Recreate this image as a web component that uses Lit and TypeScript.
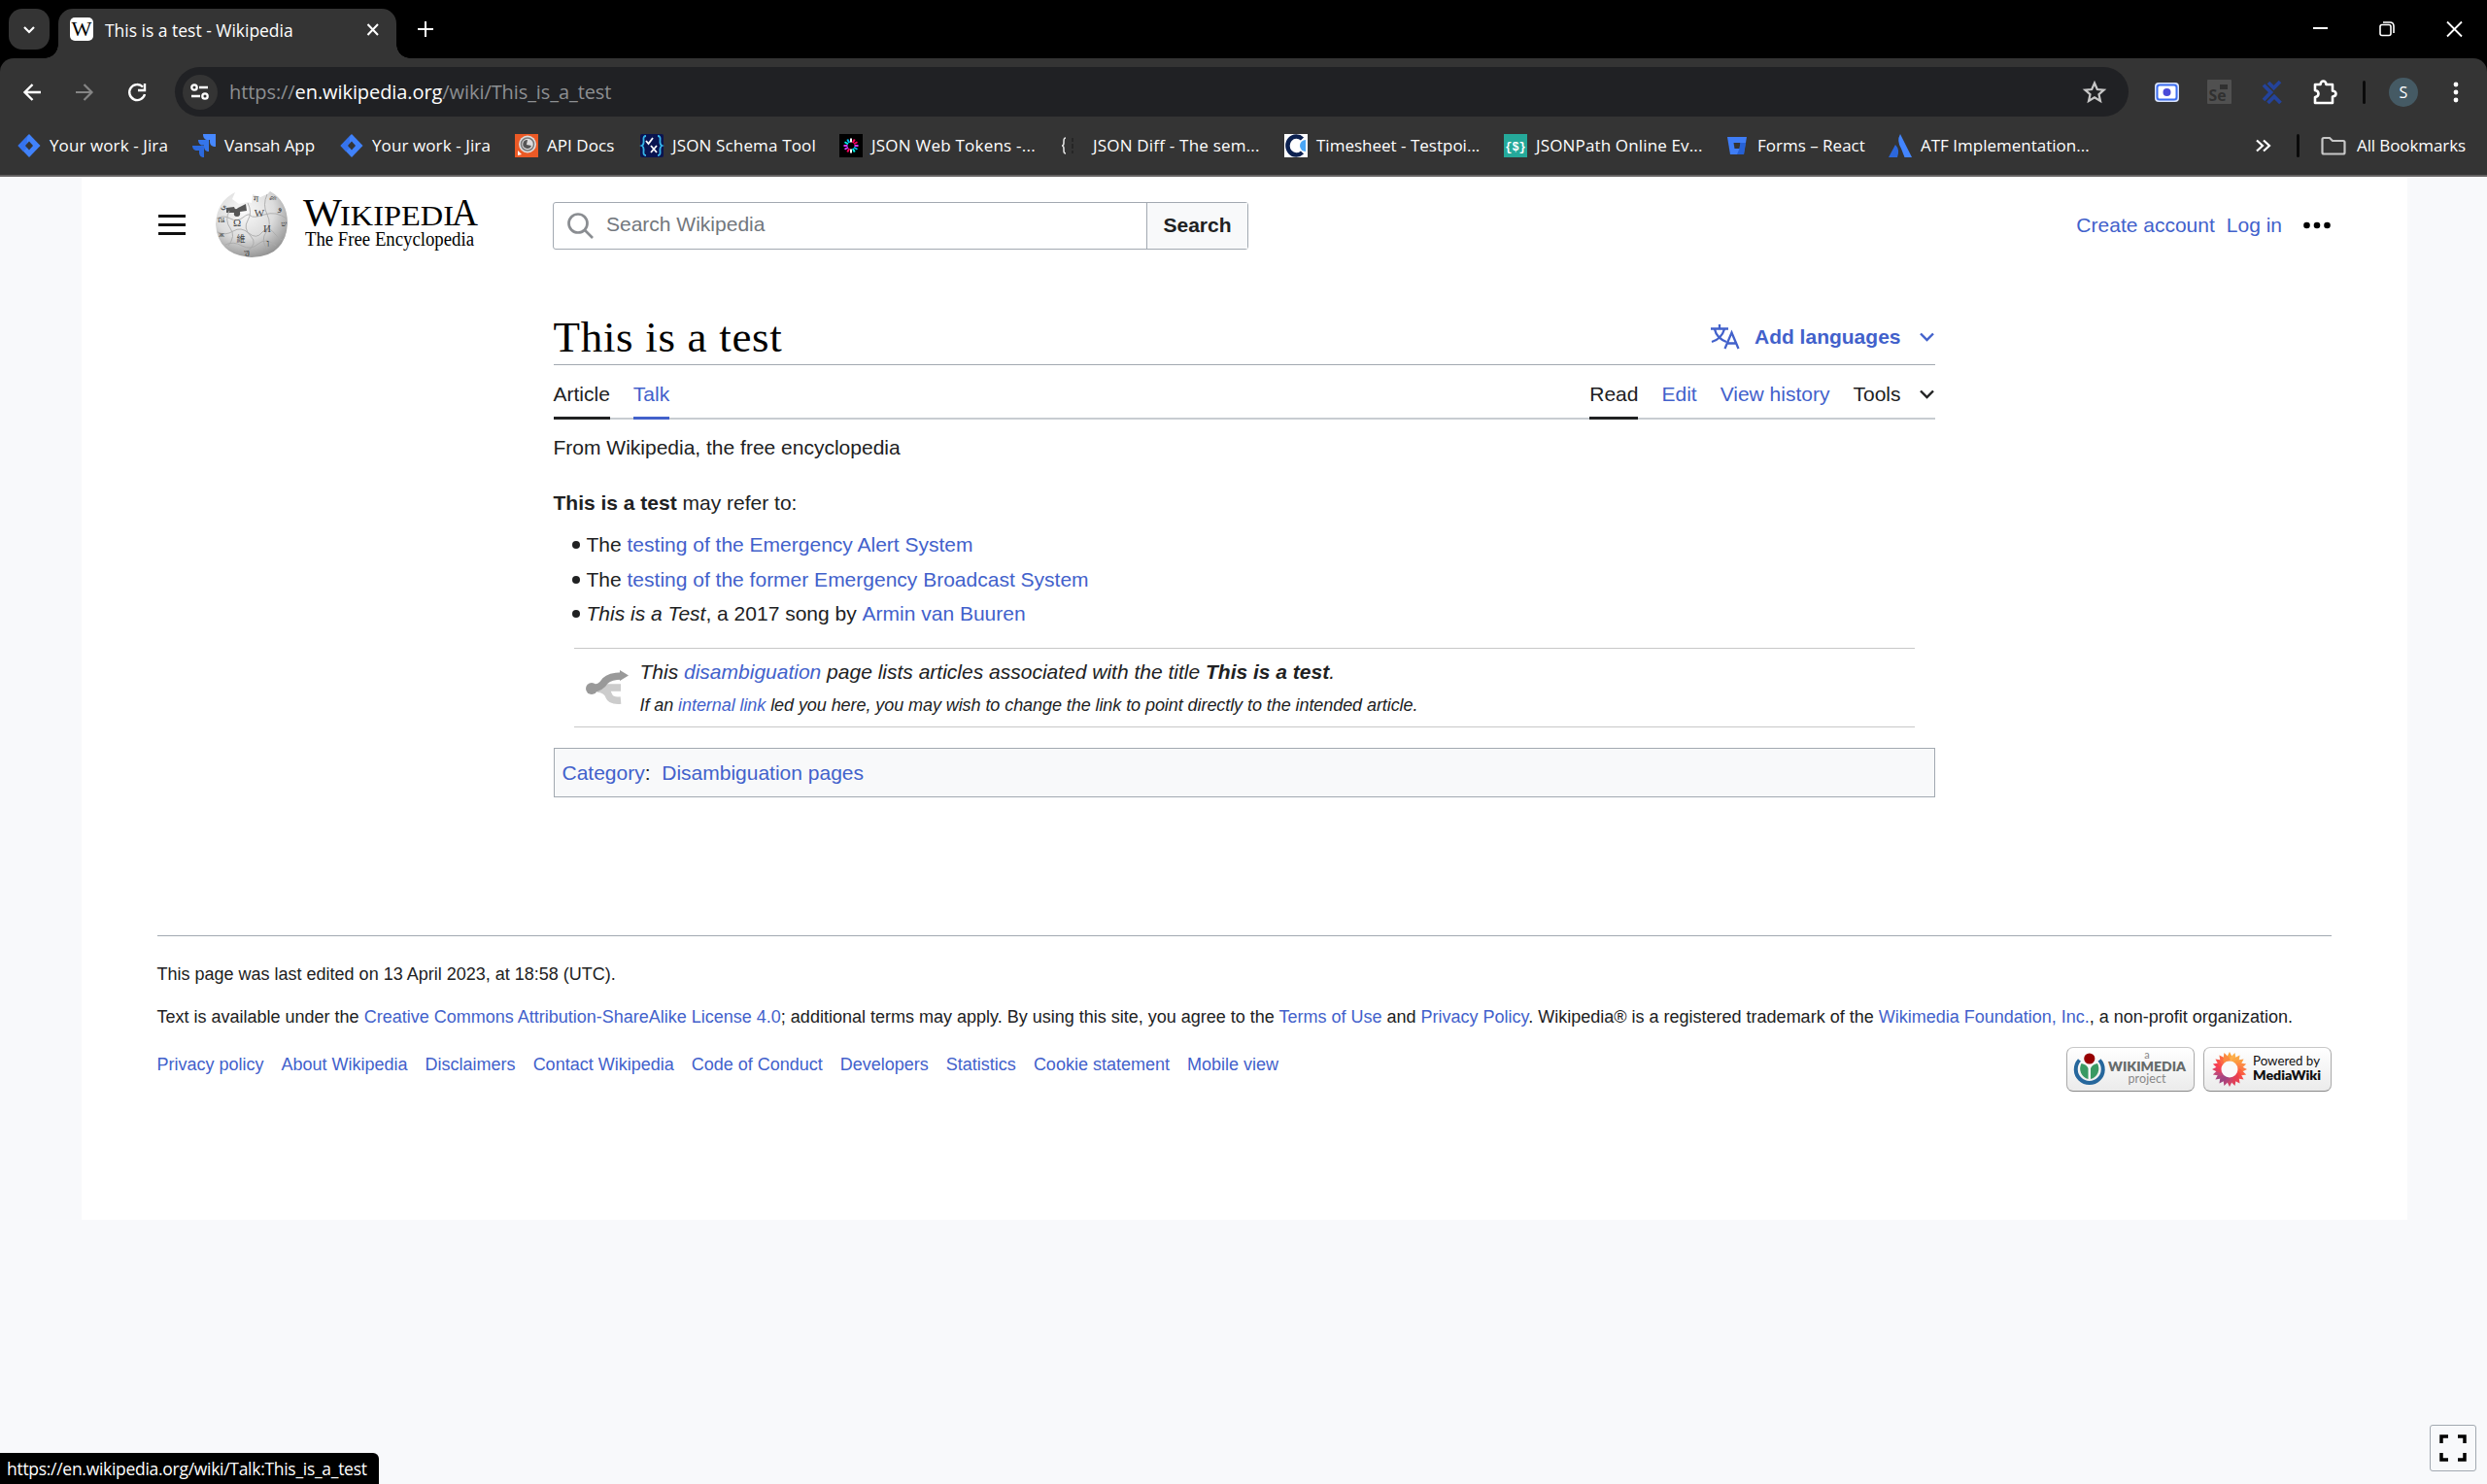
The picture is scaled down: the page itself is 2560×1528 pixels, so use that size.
import { LitElement, html, css, svg } from "lit";
import { customElement } from "lit/decorators.js";

const jira = svg`<path d="M12 0 L23.5 12 L12 24 L.5 12Z" fill="#4182fa"/><path d="M12 0C9 4 9 8 12 12L6 18 .5 12Z" fill="#3573ee"/><path d="M12 7.5L16 12 12 16.5 8 12Z" fill="#343434"/>`;
// `ls` is the tracking of each bookmark label, in pixels.
const bookmarks = [
  { t: "Your work - Jira", ls: 0.1, i: jira },
  { t: "Vansah App", ls: -0.1, i: svg`<path d="M11 0H24V13C20 13 18 11 18 8V6H16C13 6 11 4 11 0Z" fill="#4688ff"/><path d="M6 6H17V18C14 18 12 16 12 13V11.500H10C8 11.500 6 9 6 6Z" fill="#3575ea"/><path d="M0 12H12V24C9 24 7 22 7 19V17H5C2 17 0 15 0 12Z" fill="#2c69dd"/>` },
  { t: "Your work - Jira", ls: 0.1, i: jira },
  { t: "API Docs", ls: 0.05, i: svg`<rect width="24" height="24" fill="#eb5a26"/><circle cx="13" cy="10.500" r="9" fill="#ddd"/><circle cx="13" cy="10.500" r="6.500" fill="none" stroke="#777" stroke-width="1.500"/><path d="M13 6a4.500 4.500 0 1 0 4 6l-5-1z" fill="#555"/><path d="M3 22V17l4 4z" fill="#fff"/>` },
  { t: "JSON Schema Tool", ls: 0.15, i: svg`<rect width="24" height="24" rx="2" fill="#0a1450"/><path d="M6 2Q3 2 3.500 6Q4 11 1.500 12Q4 13 3.500 18Q3 22 6 22M18 2Q21 2 20.500 6Q20 11 22.500 12Q20 13 20.500 18Q21 22 18 22" fill="none" stroke="#35b5e8" stroke-width="1.800"/><path d="M6 7l2.500 3L13 4M11 12l6 7M17 12l-6 7" fill="none" stroke="#fff" stroke-width="1.800"/>` },
  { t: "JSON Web Tokens -...", ls: 0.23, i: svg`<rect width="24" height="24" fill="#000"/>${["#fff", "#fb015b", "#fb015b", "#d63aff", "#00b9f1", "#00f2e6", "#fff", "#fb015b", "#d63aff", "#d63aff", "#00f2e6", "#00b9f1"].map((c, n) => svg`<path d="M12 8.500V4.500" stroke=${c} stroke-width="2" transform="rotate(${n * 30} 12 12)"/>`)}` },
  { t: "JSON Diff - The sem...", ls: 0.2, i: svg`<path d="M5 4Q3 4 3 7V9Q3 12 1 12Q3 12 3 15V17Q3 20 5 20" fill="none" stroke="#ddd" stroke-width="1.600"/><path d="M12 4v4M12 10v5M12 17v3" stroke="#222" stroke-width="1.500"/>` },
  { t: "Timesheet - Testpoi...", ls: 0, i: svg`<rect width="24" height="24" fill="#fff"/><path d="M18.500 5A9 9.500 0 1 0 18.500 19" fill="none" stroke="#0c2150" stroke-width="4.500"/><path d="M22 6V18A6 6 0 0 1 22 6" fill="#4aa6f5"/>` },
  { t: "JSONPath Online Ev...", ls: 0.15, i: svg`<rect width="24" height="24" fill="#25a99a"/><text x="12" y="16.500" text-anchor="middle" font-size="12" font-weight="700" font-family="Liberation Mono, monospace" fill="#fff">{$}</text>` },
  { t: "Forms – React", ls: 0, i: svg`<path d="M2 3H22L19 21H5Z" fill="#3f7df6"/><path d="M8.500 9H15.500L14.500 15H9.500Z" fill="#343434"/><path d="M15.500 9H21L19 21H12L14.500 15Z" fill="#1d55c9" opacity=".7"/>` },
  { t: "ATF Implementation...", ls: 0, i: svg`<path d="M12 0Q8 7 13 15L16.500 24H24Z" fill="#4385ff"/><path d="M7 11Q12 16 9 24H0Z" fill="#2c67dc"/>` },
];

const footLinks = ["Privacy policy", "About Wikipedia", "Disclaimers", "Contact Wikipedia", "Code of Conduct", "Developers", "Statistics", "Cookie statement", "Mobile view"];

const petals = Array.from({ length: 20 }, (_, n) => {
  const colors = ["#fba33c", "#fdb04d", "#fba645", "#fb9a40", "#fd8a45", "#fb7a45", "#fb6040", "#f54a48", "#ea4050", "#e04058", "#cf4468", "#b34278", "#9d4580", "#a84580", "#c04878", "#e04060", "#f54055", "#fb5048", "#fb6a45", "#fb8a40"];
  return svg`<path d="M18 0L21.500 7V11H14.500V7Z" fill=${colors[n]} transform="rotate(${n * 18} 18 18)"/>`;
});

@customElement("browser-chrome")
export class BrowserChrome extends LitElement {
  static styles = css`
    :host { display: block; height: 182px; background: #000; color: #fff; font-family: "Open Sans", "Noto Sans", sans-serif; font-size: 17px; }
    * { box-sizing: border-box; }
    svg { display: block; flex: none; overflow: visible; }
    .strip { height: 60px; display: flex; padding: 9px 25px 0 9px; }
    .search { width: 42px; height: 42px; border-radius: 14px; background: #343434; }
    .tab { position: relative; width: 348px; height: 51px; margin-left: 9px; background: #343434; border-radius: 15px 15px 0 0; padding: 0 18px 9px 12px; display: flex; align-items: center; }
    .tab::before, .tab::after { content: ""; position: absolute; bottom: 0; width: 14px; height: 14px; }
    .tab::before { left: -14px; background: radial-gradient(circle at 0 0, #0000 13.500px, #343434 14px); }
    .tab::after { right: -14px; background: radial-gradient(circle at 100% 0, #0000 13.500px, #343434 14px); }
    .title { flex: 1; margin-left: 12px; font-size: 17.500px; letter-spacing: -0.02px; white-space: nowrap; padding-top: 2px; }
    .plus { margin: 13px 0 0 22px; }
    .win { margin-left: auto; display: flex; gap: 52px; padding-top: 12px; }
    .tools { height: 60px; background: #343434; border-radius: 14px 14px 0 0; padding: 9px 20px 0 24px; display: flex; align-items: center; }
    .fwd { margin-left: 36px; }
    .rel { margin-left: 35px; }
    .omni { margin-left: 29px; width: 2011px; height: 51px; border-radius: 26px; background: #202124; display: flex; align-items: center; padding: 0 23px 0 8px; }
    .info { width: 36px; height: 36px; border-radius: 50%; background: #343434; display: grid; place-items: center; }
    .url { margin-left: 12px; font-size: 20px; color: #8d8f92; flex: 1; letter-spacing: -0.08px; white-space: nowrap; }
    .url b { color: #fff; font-weight: 400; }
    .exts { display: flex; align-items: center; margin-left: 27px; }
    .e2 { margin-left: 29px; } .e3 { margin-left: 32px; } .e4 { margin-left: 31px; }
    .sep { width: 3px; height: 24px; border-radius: 2px; background: #0a0a0a; }
    .s1 { margin-left: 26px; }
    .avatar { width: 30px; height: 30px; border-radius: 50%; background: #455a64; margin-left: 24px; font-size: 16px; display: grid; place-items: center; }
    .menu { margin-left: 36px; }
    .marks { height: 62px; background: #343434; border-bottom: 2px solid #636161; display: flex; align-items: center; padding: 0 22px 0 18px; }
    .list { display: grid; grid-template-columns: 180px 152px 180px 129px 205px 228px 230px 226px 228px 168px 220px; }
    .mark { display: flex; align-items: center; gap: 9px; white-space: nowrap; }
    .mark span { padding-bottom: 2px; }
    .more { margin-left: 158px; }
    .s2 { margin-left: 26px; }
    .folder { margin-left: 22px; }
    .all { margin-left: 11px; white-space: nowrap; letter-spacing: -0.1px; padding-bottom: 2px; }
  `;
  render() {
    return html`
      <div class="strip">
        <div class="search"><svg width="42" height="42" fill="none" stroke="#fff" stroke-width="2.200"><path d="M16 19l5 5 5-5"/></svg></div>
        <div class="tab">
          <svg width="24" height="24"><rect width="24" height="24" rx="5" fill="#fff"/><text x="12" y="19" text-anchor="middle" font-family="Liberation Serif, serif" font-size="21" textLength="21" lengthAdjust="spacingAndGlyphs" fill="#000">W</text></svg>
          <span class="title">This is a test - Wikipedia</span>
          <svg width="13" height="13" stroke="#fff" stroke-width="2"><path d="M1.500 1l10.500 11M12 1L1.500 12"/></svg>
        </div>
        <svg class="plus" width="16" height="16" stroke="#fff" stroke-width="2"><path d="M8 0v16M0 8h16"/></svg>
        <div class="win">
          <svg width="16" height="18" stroke="#fff" stroke-width="2"><path d="M0 8h15"/></svg>
          <svg width="17" height="18" fill="none" stroke="#fff" stroke-width="1.600"><rect x="1" y="4.500" width="11" height="11" rx="2"/><path d="M4 2H11Q15 2 15 6V13"/></svg>
          <svg width="17" height="18" stroke="#fff" stroke-width="1.800"><path d="M1 1.500l15 15M16 1.500L1 16.500"/></svg>
        </div>
      </div>
      <div class="tools">
        <svg width="18" height="18" fill="none" stroke="#fff" stroke-width="2.400"><path d="M18 9H2M9.500 1L1.500 9l8 8"/></svg>
        <svg class="fwd" width="18" height="18" fill="none" stroke="#858585" stroke-width="2.200"><path d="M0 9H16M8.500 1l8 8-8 8"/></svg>
        <svg class="rel" width="20" height="20" fill="none" stroke="#fff" stroke-width="2.400"><path d="M16 4.500A8 8 0 1 0 18 12M18 1V8H11"/></svg>
        <div class="omni">
          <div class="info"><svg width="20" height="18" fill="none" stroke="#fff" stroke-width="2.300"><circle cx="4" cy="4" r="2.700"/><path d="M9 4H18M1 13H10"/><circle cx="15" cy="13" r="2.700"/></svg></div>
          <span class="url">https://<b>en.wikipedia.org</b>/wiki/This_is_a_test</span>
          <svg width="24" height="24" fill="none" stroke="#c7c7c7" stroke-width="2.200"><path d="M12 2.500L14.800 9L21.700 9.600L16.500 14.200L18 21L12 17.400L6 21L7.500 14.200L2.300 9.600L9.200 9Z"/></svg>
        </div>
        <div class="exts">
          <svg width="25" height="20"><rect width="25" height="20" rx="4" fill="#d9e3fb"/><rect x="2.500" y="2.500" width="20" height="15" rx="2.500" fill="#fff" stroke="#3c6df0" stroke-width="2"/><circle cx="12.500" cy="10" r="4" fill="#4a4ad8"/></svg>
          <svg class="e2" width="25" height="25"><rect width="25" height="25" rx="1" fill="#505050"/><rect x="13" y="5" width="8" height="5" fill="#303030"/><text x="1.500" y="22" font-size="16" font-weight="700" fill="#303030" font-family="Open Sans, sans-serif" textLength="18" lengthAdjust="spacingAndGlyphs">Se</text></svg>
          <svg class="e3" width="20" height="24" fill="none" stroke="#24439a" stroke-width="3.800"><path d="M6 2l5.500 5.500L18 1M1 4.500l7.500 7.500L1 20M5.500 23l6.500-6.500 6.500 6.500"/></svg>
          <svg class="e4" width="26" height="26" fill="none" stroke="#fff" stroke-width="2.600"><path d="M3 5H8.500Q9 1.500 11.500 1.500T14.500 5H21V11.500Q24.500 12 24.500 14.500T21 17.500V24H3V18Q6.500 17.500 6.500 14.500T3 11Z" stroke-linejoin="round"/></svg>
          <div class="sep s1"></div>
          <div class="avatar">S</div>
          <svg class="menu" width="6" height="24" fill="#fff"><circle cx="3" cy="4" r="2.400"/><circle cx="3" cy="12" r="2.400"/><circle cx="3" cy="20" r="2.400"/></svg>
        </div>
      </div>
      <div class="marks">
        <div class="list">${bookmarks.map((b) => html`<div class="mark"><svg width="24" height="24">${b.i}</svg><span style="letter-spacing:${b.ls}px">${b.t}</span></div>`)}</div>
        <svg class="more" width="16" height="14" fill="none" stroke="#fff" stroke-width="2.200"><path d="M1 1.500l6 5.500-6 5.500M8 1.500l6 5.500-6 5.500"/></svg>
        <div class="sep s2"></div>
        <svg class="folder" width="26" height="20" fill="none" stroke="#c7c7c7" stroke-width="2.200"><path d="M3 2H9L12 5H23Q24.500 5 24.500 6.500V17Q24.500 18.500 23 18.500H3Q1.500 18.500 1.500 17V3.500Q1.500 2 3 2Z"/></svg>
        <span class="all">All Bookmarks</span>
      </div>`;
  }
}

@customElement("wiki-page")
export class WikiPage extends LitElement {
  static styles = css`
    :host { display: block; width: 2394px; height: 1074px; margin-left: 84px; background: #fff; padding: 0 78px 0 77.500px; box-sizing: border-box; font: 21px/34px "Liberation Sans", Arial, sans-serif; color: #202122; }
    * { box-sizing: border-box; }
    svg { display: block; flex: none; overflow: visible; }
    a { color: #4261cb; }
    header { display: flex; align-items: flex-start; height: 146px; padding-top: 14px; }
    .burger { margin: 25px 0 0 1.500px; }
    .globe { margin-left: 31px; margin-top: 1px; }
    .word { margin: 0 0 0 16px; width: 181px; }
    .find { display: flex; width: 716px; height: 49px; margin: 12px 0 0 76px; border: 1.500px solid #a2a9b1; border-radius: 3px; }
    .field { flex: 1; display: flex; align-items: center; padding-left: 14px; gap: 13px; color: #72777d; }
    .field span { padding-bottom: 4px; }
    .btn { width: 104px; border-left: 1px solid #a2a9b1; background: #f8f9fa; font-weight: 700; display: grid; place-items: center; padding-bottom: 2px; }
    .user { margin: 19px 1px 0 auto; display: flex; gap: 12px; align-items: center; }
    .user svg { margin-left: 10px; }
    main { width: 1422px; margin-left: 408px; height: 635px; }
    .head { display: flex; height: 48px; border-bottom: 1px solid #a2a9b1; align-items: flex-start; justify-content: space-between; }
    h1 { margin: 0; font: 400 45px/50px "Liberation Serif", serif; color: #000; letter-spacing: 0.7px; white-space: nowrap; margin-top: -6px; }
    .lang { display: flex; align-items: center; font-weight: 700; color: #4261cb; margin-top: 2px; }
    .lang svg:first-child { margin-right: 15px; }
    .chev { margin: 0 1px 0 19px; }
    nav { display: flex; height: 56px; border-bottom: 2px solid #c8ccd1; gap: 24px; }
    nav span, nav a { height: 56px; padding-top: 13px; }
    .on { border-bottom: 3px solid #202122; }
    .hov { border-bottom: 3px solid #4261cb; }
    .push { margin-left: auto; }
    .toolsm { display: flex; align-items: center; height: 34px; margin-top: 13px; }
    nav .toolsm span { padding: 0; height: 34px; }
    .from { margin-top: 12px; }
    .intro { margin-top: 23px; }
    ul { list-style: none; margin: 8px 0 0; padding: 0; }
    li { display: flex; align-items: center; padding-left: 19px; height: 35.700px; white-space: pre; }
    li::before { content: ""; width: 8px; height: 8px; border-radius: 50%; background: #202122; margin-right: 7px; }
    .dis { margin: 17px 21px 0; height: 82px; border: solid #c8c8c8; border-width: 1px 0; display: flex; padding: 7px 0 0 12px; font-style: italic; }
    .dis svg { margin-top: 15px; }
    .dis div { margin-left: 12px; line-height: 34px; white-space: nowrap; }
    .dis small { display: block; font-size: 18px; line-height: 34px; letter-spacing: -0.07px; }
    .cat { margin-top: 21px; height: 51px; border: 1px solid #a2a9b1; background: #f8f9fa; padding: 8px; white-space: pre; }
    footer { border-top: 1px solid #a2a9b1; font-size: 18px; line-height: 30px; padding-top: 24px; }
    p { margin: 0; white-space: nowrap; }
    .p2 { margin-top: 14px; }
    .row { display: flex; gap: 18px; margin-top: 19px; height: 48px; }
    .row a { white-space: nowrap; }
    .badges { margin: -3px 0 0 auto; display: flex; gap: 9px; }
    .badge { width: 132px; height: 46px; border: 1.500px solid #aaa; border-top-color: #c8c8c8; border-bottom-color: #888; border-radius: 7px; background: linear-gradient(#fff, #ebebeb); }
  `;
  render() {
    const chev = (c: string) => html`<svg class="chev" width="15" height="10" fill="none" stroke=${c} stroke-width="2.400"><path d="M1 1.500l6.500 6.500L14 1.500"/></svg>`;
    return html`
      <header>
        <svg class="burger" width="28" height="22" stroke="#101010" stroke-width="3"><path d="M0 1.500h28M0 10.500h28M0 19.500h28"/></svg>
        <svg class="globe" width="74" height="68" viewBox="0 0 74 68">
          <defs><radialGradient id="g" cx=".4" cy=".3" r=".75"><stop offset="0" stop-color="#fafafa"/><stop offset=".55" stop-color="#dcdcdc"/><stop offset="1" stop-color="#8e8e8e"/></radialGradient></defs>
          <path d="M20 1L17 8 24 13 33 11 37 12 38 3 46 6 53 3 56 0Q74 10 74 33Q72 67 37 68Q2 66 0 34Q1 10 20 1Z" fill="url(#g)"/>
          <path d="M11 17L19 16Q20 20 23 17L31 13 32 20 25 21Q26 26 22 26Q18 26 19 22L11 22Z" fill="#565656"/>
          <path d="M1 28Q8 24 15 28T28 27T36 25T50 24T73 28M2 42Q10 46 18 41T34 43T48 42T62 45T72 42M10 55Q18 51 27 56T44 54T62 56M14 20Q9 30 15 38T13 56M33 12Q38 22 33 30T36 46T32 62M53 3Q48 14 53 24T52 42T53 60" fill="none" stroke="#aaa" stroke-width=".9"/>
          <g font-family="Liberation Serif, DejaVu Serif, serif" fill="#444" text-anchor="middle" font-size="11"><text x="22" y="36">Ω</text><text x="45" y="26">W</text><text x="53" y="42">И</text><text x="26" y="52" font-size="9" font-family="Noto Sans CJK SC, sans-serif">維</text><text x="54" y="57">ו</text><text x="41" y="11" font-size="9">ग</text><text x="59" y="9" font-size="8">ன</text><text x="66" y="20" font-size="9">و</text><text x="70" y="36" font-size="8">ש</text><text x="8" y="18" font-size="8">ي</text><text x="5" y="32" font-size="8">ณ</text><text x="6" y="47" font-size="8">ж</text><text x="32" y="65" font-size="8">უ</text></g>
        </svg>
        <svg class="word" width="181" height="66" font-family="Liberation Serif, serif" fill="#000">
          <text x="0" y="35.500" font-size="39" textLength="40" lengthAdjust="spacingAndGlyphs">W</text><text x="38" y="35.500" font-size="29" textLength="117" lengthAdjust="spacingAndGlyphs">IKIPEDI</text><text x="153" y="35.500" font-size="39" textLength="27" lengthAdjust="spacingAndGlyphs">A</text>
          <text x="2" y="57" font-size="20.500" textLength="174" lengthAdjust="spacingAndGlyphs">The Free Encyclopedia</text>
        </svg>
        <div class="find"><div class="field"><svg width="27" height="27" fill="none" stroke="#8a8d91" stroke-width="2.700"><circle cx="11" cy="11" r="9.500"/><path d="M17.500 17.500L26 26"/></svg><span>Search Wikipedia</span></div><div class="btn">Search</div></div>
        <div class="user"><a>Create account</a><a>Log in</a><svg width="28" height="8" fill="#000"><circle cx="3.500" cy="4" r="3.300"/><circle cx="14" cy="4" r="3.300"/><circle cx="24.500" cy="4" r="3.300"/></svg></div>
      </header>
      <main>
        <div class="head"><h1>This is a test</h1>
          <div class="lang"><svg width="30" height="26" viewBox="0 0 30 26" fill="none" stroke="#4261cb" stroke-width="2.300"><path d="M0 4.500H18M9 0V5M4 5Q6 14 16 18M14 5Q11 15 1 18M14.500 25L21.500 8.500 28.500 25M17 19.500H26"/></svg>Add languages${chev("#4261cb")}</div></div>
        <nav><span class="on">Article</span><a class="hov">Talk</a><span class="on push">Read</span><a>Edit</a><a>View history</a><div class="toolsm"><span>Tools</span>${chev("#202122")}</div></nav>
        <div class="from">From Wikipedia, the free encyclopedia</div>
        <div class="intro"><b>This is a test</b> may refer to:</div>
        <ul><li>The <a>testing of the Emergency Alert System</a></li><li>The <a>testing of the former Emergency Broadcast System</a></li><li><i>This is a Test</i>, a 2017 song by <a>Armin van Buuren</a></li></ul>
        <div class="dis"><svg width="44" height="36" fill="none"><path d="M8 18H36M12 19Q22 20 24 27Q26 32 36 31" stroke="#ccc" stroke-width="7.500"/><path d="M6 19Q15 19 20 11Q25 6 37 6" stroke="#999" stroke-width="7.500"/><circle cx="6" cy="19" r="6" fill="#999"/><path d="M35 0L44 5.500 35 11Z" fill="#999"/></svg>
          <div>This <a>disambiguation</a> page lists articles associated with the title <b>This is a test</b>.<small>If an <a>internal link</a> led you here, you may wish to change the link to point directly to the intended article.</small></div></div>
        <div class="cat"><a>Category</a>:  <a>Disambiguation pages</a></div>
      </main>
      <footer>
        <p>This page was last edited on 13 April 2023, at 18:58 (UTC).</p>
        <p class="p2">Text is available under the <a>Creative Commons Attribution-ShareAlike License 4.0</a>; additional terms may apply. By using this site, you agree to the <a>Terms of Use</a> and <a>Privacy Policy</a>. Wikipedia® is a registered trademark of the <a>Wikimedia Foundation, Inc.</a>, a non-profit organization.</p>
        <div class="row">${footLinks.map((l) => html`<a>${l}</a>`)}
          <div class="badges">
            <div class="badge"><svg width="130" height="43"><path d="M12.500 12.500A14 14 0 1 0 33 12.500" fill="none" stroke="#26679c" stroke-width="4"/><path d="M14.500 16A11 11 0 0 0 21.500 32V21Q20 17 14.500 16ZM31 16A11 11 0 0 1 24 32V21Q25.500 17 31 16Z" fill="#3a9a63"/><circle cx="22.800" cy="11" r="5.600" fill="#970000"/><g font-family="Lato, sans-serif" fill="#666b6b" text-anchor="middle"><text x="82" y="11" font-size="11" fill="#888">a</text><text x="82" y="24" font-size="13" font-weight="800" textLength="80" lengthAdjust="spacingAndGlyphs">WIKIMEDIA</text><text x="82" y="36" font-size="12.500" fill="#888" textLength="39">project</text></g></svg></div>
            <div class="badge"><svg width="130" height="43"><g transform="translate(8 4)">${petals}<circle cx="18" cy="18" r="8.500" fill="#fafafa"/></g><g font-family="Lato, sans-serif" fill="#111"><text x="50" y="18" font-size="13" textLength="69" lengthAdjust="spacingAndGlyphs">Powered by</text><text x="50" y="32.500" font-size="13.500" font-weight="800" textLength="70" lengthAdjust="spacingAndGlyphs">MediaWiki</text></g></svg></div>
          </div></div>
      </footer>`;
  }
}

@customElement("app-root")
export class AppRoot extends LitElement {
  static styles = css`
    :host { display: block; position: relative; width: 2560px; height: 1528px; background: #f8f9fb; overflow: hidden; }
    .status { position: absolute; left: 0; bottom: 0; width: 390px; height: 32px; background: #000; border-top-right-radius: 6px; color: #fff; font: 17.500px/33px "Open Sans", "Noto Sans", sans-serif; padding-left: 7px; box-sizing: border-box; white-space: nowrap; letter-spacing: -0.29px; }
    .full { position: absolute; right: 11px; bottom: 13px; width: 48px; height: 48px; box-sizing: border-box; border: 1.500px solid #a2a9b1; border-radius: 3px; background: #f8f9fb; display: grid; place-items: center; }
  `;
  render() {
    return html`<browser-chrome></browser-chrome><wiki-page></wiki-page>
      <div class="status">https://en.wikipedia.org/wiki/Talk:This_is_a_test</div>
      <div class="full"><svg width="28" height="28" fill="none" stroke="#000" stroke-width="3.500"><path d="M2 9V2H9M19 2H26V9M26 19V26H19M9 26H2V19"/></svg></div>`;
  }
}
